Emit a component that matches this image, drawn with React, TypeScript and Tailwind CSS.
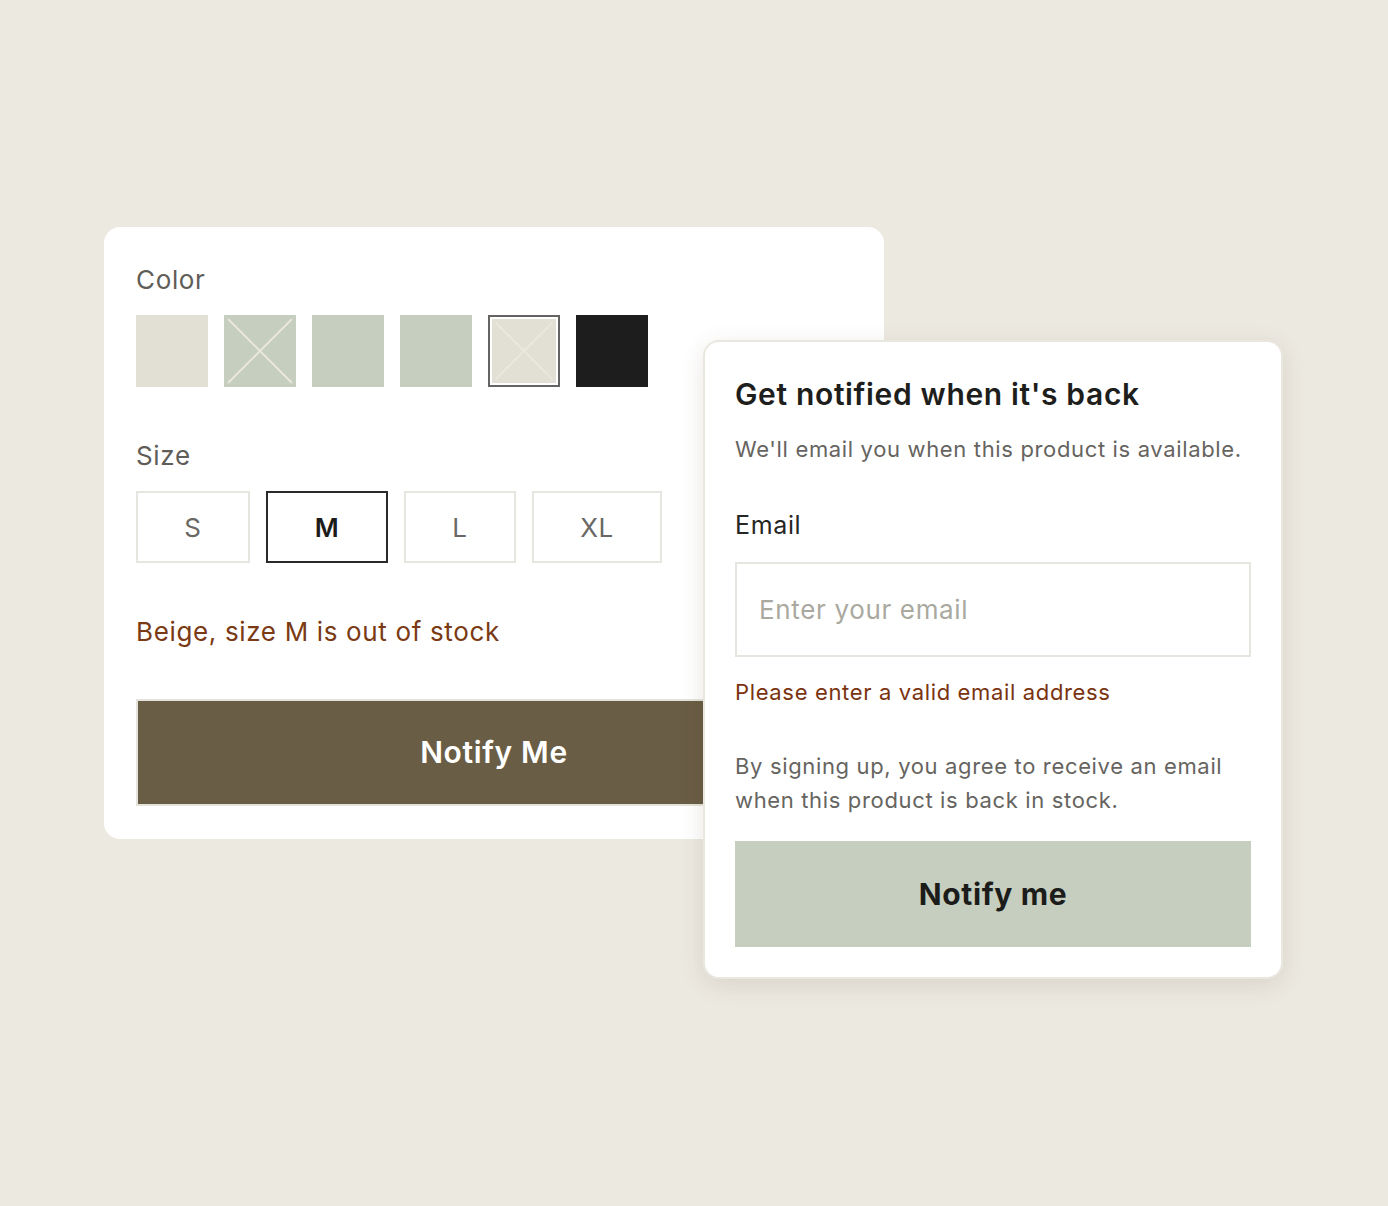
import React, { useState } from 'react';

const FONT = { fontFamily: 'Inter, "Noto Sans", sans-serif' };

interface Swatch {
  name: string;
  color: string;
  soldOut?: boolean;
}

const swatches: Swatch[] = [
  { name: 'Beige', color: 'bg-[#e2dfd4]' },
  { name: 'Sage', color: 'bg-[#c6cebf]', soldOut: true },
  { name: 'Sage 2', color: 'bg-[#c6cebf]' },
  { name: 'Sage 3', color: 'bg-[#c6cebf]' },
  { name: 'Sand', color: 'bg-[#e2dfd4]', soldOut: true },
  { name: 'Black', color: 'bg-[#1c1d1c]' },
];

const sizes = [
  { label: 'S', width: 'w-[114px]' },
  { label: 'M', width: 'w-[122px]' },
  { label: 'L', width: 'w-[112px]' },
  { label: 'XL', width: 'w-[130px]' },
];

// diagonal cross for unavailable swatches
const Cross: React.FC = () => (
  <svg className="absolute inset-0 w-full h-full" viewBox="0 0 72 72" fill="none">
    <line x1="4" y1="4" x2="68" y2="68" stroke="#ebe8dc" strokeWidth="1.8" />
    <line x1="68" y1="4" x2="4" y2="68" stroke="#ebe8dc" strokeWidth="1.8" />
  </svg>
);

const App: React.FC = () => {
  const [color, setColor] = useState(4);
  const [size, setSize] = useState('M');
  const [email, setEmail] = useState('');

  return (
    <div className="min-h-screen w-full bg-[#ece9e1] flex items-center justify-center tracking-[0.65px]" style={FONT}>
      <div className="relative w-[1180px] h-[752px]">
        {/* Product options card */}
        <div className="w-[780px] h-[612px] bg-white rounded-2xl px-8 pt-[37px]">
          <div className="text-[26px] leading-[32px] text-[#5f5d58]">Color</div>
          <div className="flex gap-4 mt-[19px]">
            {swatches.map((s, i) => (
              <button
                key={s.name}
                onClick={() => setColor(i)}
                className={`w-[72px] h-[72px] ${
                  color === i ? 'border-2 border-[#656462] p-[2px] bg-white' : ''
                }`}
              >
                <div className={`relative w-full h-full ${s.color}`}>{s.soldOut && <Cross />}</div>
              </button>
            ))}
          </div>

          <div className="text-[26px] leading-[32px] text-[#5f5d58] mt-[53px]">Size</div>
          <div className="flex gap-4 mt-[19px]">
            {sizes.map((s) => (
              <button
                key={s.label}
                onClick={() => setSize(s.label)}
                className={`${s.width} h-[72px] border-2 flex items-center justify-center text-[26px] ${
                  size === s.label
                    ? 'border-[#2a2a28] text-[#1c1c1a] font-semibold'
                    : 'border-[#e6e5df] text-[#6a6864]'
                }`}
              >
                {s.label}
              </button>
            ))}
          </div>

          <div className="text-[26px] leading-[32px] text-[#7a3a14] mt-[53px]">Beige, size M is out of stock</div>

          <button className="mt-[51px] w-full h-[107px] bg-[#6a5d45] border-2 border-[#e4e2da] text-white text-[30px] font-semibold">
            Notify Me
          </button>
        </div>

        {/* Back-in-stock popup */}
        <div className="absolute left-[599px] top-[113px] w-[580px] h-[639px] bg-white rounded-2xl border-2 border-[#e9e7e0] px-[30px] pt-[34px] shadow-[0_6px_24px_rgba(70,60,30,0.12)]">
          <h3 className="text-[30px] leading-[36px] font-semibold text-[#1e1e1c]">Get notified when it's back</h3>
          <p className="mt-[21px] text-[22px] leading-[32px] text-[#666460]">
            We'll email you when this product is available.
          </p>

          <label className="block mt-[44px] text-[25px] leading-[32px] text-[#262624]">Email</label>
          <input
            type="email"
            value={email}
            onChange={(e) => setEmail(e.target.value)}
            placeholder="Enter your email"
            className="mt-[21px] w-full h-[95px] border-2 border-[#e6e5df] px-[22px] text-[26px] tracking-[0.65px] text-[#262624] placeholder:text-[#aaa9a0] outline-none"
            style={FONT}
          />
          <p className="mt-[19px] text-[22px] leading-[32px] text-[#7a3310]">Please enter a valid email address</p>

          <p className="mt-[41px] text-[22px] leading-[34px] text-[#666460]">
            By signing up, you agree to receive an email when this product is back in stock.
          </p>

          <button className="mt-[24px] w-full h-[106px] bg-[#c6cebf] text-[30px] font-bold text-[#1c1c1a]">
            Notify me
          </button>
        </div>
      </div>
    </div>
  );
};

export default App;
